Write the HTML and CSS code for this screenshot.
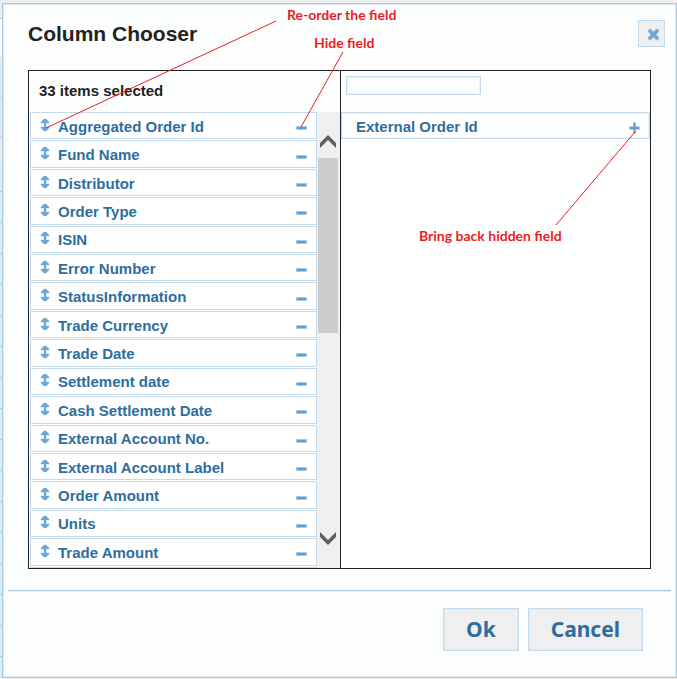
FILE: index.html
```html
<!DOCTYPE html>
<html lang="en">
<head>
<meta charset="utf-8">
<title>Column Chooser</title>
<link rel="stylesheet" href="styles.css">
</head>
<body>
<svg class="symbols" aria-hidden="true">
  <symbol id="move" viewBox="0 0 10 14"><path d="M4 .5h2l3.500 3.500v1.500h-3v3h3V10L6 13.500H4L.5 10V8.500h3v-3h-3V4z" fill="#c5def2"/><path d="M4 1h2l3 3v1H6v4h3v1l-3 3H4l-3-3V9h3V5H1V4z" fill="#6da8d5"/></symbol>
  <symbol id="minus" viewBox="0 0 11 13"><path d="M0 5h11v4H0z" fill="#a5cdea"/><path d="M1 6h9v2H1z" fill="#5f9fd0"/></symbol>
  <symbol id="plus" viewBox="0 0 11 13"><path d="M4 1h3v4h4v4H7v4H4V9H0V5h4z" fill="#b5d5ee"/><path d="M4.500 2h2v4H10v2H6.500v4h-2V8H1V6h3.500z" fill="#5f9fd0"/></symbol>
</svg>
<main class="dialog">
  <header class="titlebar">
    <h1>Column Chooser</h1>
    <button class="close" aria-label="Close"><svg viewBox="0 0 13 13" width="13" height="13"><path d="M3 0 6.500 3 10 0l3 3-3.500 3.500L13 10l-3 3-3.500-3L3 13l-3-3 3.500-3.500L0 3z" fill="#b5d5ee"/><path d="M3 1 6.500 4 10 1l2 2-3 3.500 3 3.500-2 2-3.500-3L3 12l-2-2 3-3.500L1 3z" fill="#6da8d5"/></svg></button>
  </header>
  <section class="chooser">
    <div class="pane selected">
      <div class="pane-head"><span class="count">33 items selected</span><a class="all" href="#">Remove all</a></div>
      <div class="scroller">
        <ul class="fields">
          <li><svg class="move"><use href="#move"/></svg><span>Aggregated Order Id</span><button aria-label="Hide"><svg><use href="#minus"/></svg></button></li>
          <li><svg class="move"><use href="#move"/></svg><span>Fund Name</span><button aria-label="Hide"><svg><use href="#minus"/></svg></button></li>
          <li><svg class="move"><use href="#move"/></svg><span>Distributor</span><button aria-label="Hide"><svg><use href="#minus"/></svg></button></li>
          <li><svg class="move"><use href="#move"/></svg><span>Order Type</span><button aria-label="Hide"><svg><use href="#minus"/></svg></button></li>
          <li><svg class="move"><use href="#move"/></svg><span>ISIN</span><button aria-label="Hide"><svg><use href="#minus"/></svg></button></li>
          <li><svg class="move"><use href="#move"/></svg><span>Error Number</span><button aria-label="Hide"><svg><use href="#minus"/></svg></button></li>
          <li><svg class="move"><use href="#move"/></svg><span>StatusInformation</span><button aria-label="Hide"><svg><use href="#minus"/></svg></button></li>
          <li><svg class="move"><use href="#move"/></svg><span>Trade Currency</span><button aria-label="Hide"><svg><use href="#minus"/></svg></button></li>
          <li><svg class="move"><use href="#move"/></svg><span>Trade Date</span><button aria-label="Hide"><svg><use href="#minus"/></svg></button></li>
          <li><svg class="move"><use href="#move"/></svg><span>Settlement date</span><button aria-label="Hide"><svg><use href="#minus"/></svg></button></li>
          <li><svg class="move"><use href="#move"/></svg><span>Cash Settlement Date</span><button aria-label="Hide"><svg><use href="#minus"/></svg></button></li>
          <li><svg class="move"><use href="#move"/></svg><span>External Account No.</span><button aria-label="Hide"><svg><use href="#minus"/></svg></button></li>
          <li><svg class="move"><use href="#move"/></svg><span>External Account Label</span><button aria-label="Hide"><svg><use href="#minus"/></svg></button></li>
          <li><svg class="move"><use href="#move"/></svg><span>Order Amount</span><button aria-label="Hide"><svg><use href="#minus"/></svg></button></li>
          <li><svg class="move"><use href="#move"/></svg><span>Units</span><button aria-label="Hide"><svg><use href="#minus"/></svg></button></li>
          <li><svg class="move"><use href="#move"/></svg><span>Trade Amount</span><button aria-label="Hide"><svg><use href="#minus"/></svg></button></li>
          <li></li>
        </ul>
        <div class="scrollbar">
          <svg viewBox="0 0 16 13" width="16" height="13"><path d="M0 8 8 0l8 8v5L8 5 0 13z" fill="#606060"/></svg>
          <div class="thumb"></div>
          <svg viewBox="0 0 16 13" width="16" height="13"><path d="M0 0l8 8 8-8v5l-8 8-8-8z" fill="#606060"/></svg>
        </div>
      </div>
    </div>
    <div class="pane available">
      <div class="pane-head"><input class="search" type="text" aria-label="Search fields"><a class="all" href="#">Add all</a></div>
      <ul class="hidden-fields">
        <li><span>External Order Id</span><button aria-label="Show"><svg><use href="#plus"/></svg></button></li>
      </ul>
    </div>
  </section>
  <footer class="buttons">
    <button>Ok</button>
    <button>Cancel</button>
  </footer>
</main>
<div class="notes">
  <svg class="leaders" width="677" height="260" aria-hidden="true"><path d="M276 21 46 128M343 52l-42 75M635 132l-79 93"/></svg>
  <span class="note reorder">Re-order the field</span>
  <span class="note hide">Hide field</span>
  <span class="note restore">Bring back hidden field</span>
</div>
</body>
</html>
```
FILE: styles.css
```css
* { box-sizing: border-box; }

body {
  margin: 0;
  padding: 3px 0 1px 2px;
  position: relative;
  background:
    linear-gradient(#eee 18px, #a6c9e2 18px 19px, #fff 19px 57px, #c5dbec 57px 58px, #eee 58px 60px, #dfe9f2 60px 96px, #c5dbec 96px 97px, #dfe9f2 97px 137px, #a6c9e2 137px 138px, #eee 138px 161px, transparent 161px) 0 0 / 2px 100% no-repeat,
    repeating-linear-gradient(#dfebf5 0 30px, #a6c9e2 30px 31px) 0 6px / 2px 100% no-repeat,
    #eee;
  color: #222;
  font: bold 15px/18px "Liberation Sans", Arial, sans-serif;
}

button { padding: 0; font: inherit; cursor: pointer; }
ul { list-style: none; margin: 0; padding: 0; }
.symbols { position: absolute; width: 0; height: 0; }

.dialog {
  border: 1px solid #a6c9e2;
  box-shadow: inset 0 0 0 1px #dfedf7;
  background: #fcfefe;
  padding: 16px 5px 26px;
}

.titlebar {
  display: flex;
  justify-content: space-between;
  align-items: flex-start;
  padding: 0 6px 0 20px;
}

h1 { margin: 0; font-size: 21px; line-height: 28px; }

.close {
  display: flex;
  align-items: center;
  justify-content: center;
  width: 27px;
  height: 27px;
  padding: 2px 0 0 3px;
  border: 1px solid #c5dbec;
  background: #efefef;
}

.chooser {
  display: flex;
  height: 499px;
  margin: 22px 20px 21px;
  border: 1px solid #222;
}

.pane { display: flex; flex-direction: column; min-width: 0; }
.selected { flex: 1 1 312px; border-right: 1px solid #222; }
.available { flex: 1 1 309px; background: #fff; }

.pane-head {
  display: flex;
  justify-content: space-between;
  align-items: center;
  height: 41px;
  flex: none;
  padding: 0 10px 2px;
  background: #fcfefe;
}

.all { color: #fff; text-decoration: none; }

.search {
  align-self: flex-start;
  width: 135px;
  height: 19px;
  margin: 5px 0 0 -5px;
  border: 1px solid #c5dbec;
  box-shadow: inset 0 0 0 1px #e8f2f9;
  background: #fcfefe;
}

.scroller { display: flex; flex: 1; min-height: 0; overflow: hidden; background: #fff; }

.fields {
  flex: 1;
  display: grid;
  grid-template-rows: repeat(17, 1fr);
  gap: 1px;
  height: 482px;
  margin-left: 1px;
}

li {
  display: flex;
  align-items: center;
  border: 1px solid #c5dbec;
  background: #fff;
  color: #2e6e9e;
  min-height: 0;
}

li span { flex: 1; padding-top: 2px; }
li svg { display: block; width: 11px; height: 13px; }
li .move { width: 10px; height: 14px; margin: 0 8px 2px 9px; }
li button { border: 0; background: none; margin: 4px 9px 0 0; }
.hidden-fields li { height: 27px; padding-left: 14px; box-shadow: inset 0 0 0 1px #e8f2f9; }

.scrollbar {
  display: flex;
  flex-direction: column;
  align-items: center;
  width: 23px;
  padding: 23px 1px 23px 0;
  background: #efefef;
}

.thumb { width: 20px; height: 175px; margin: 10px 0 auto; background: #cdcdcd; }

.buttons {
  display: flex;
  justify-content: flex-end;
  gap: 9px;
  padding: 17px 28px 0 0;
  border-top: 1px solid #a6c9e2;
  box-shadow: inset 0 1px #dfedf7;
}

.buttons button {
  height: 43px;
  padding: 0 22px 2px;
  border: 1px solid #c5dbec;
  box-shadow: inset 0 0 0 1px #dfe9f2;
  background: #efefef;
  color: #2e6e9e;
  font: bold 21px/26px "Noto Sans", sans-serif;
}

.notes { position: absolute; top: 0; left: 0; pointer-events: none; }
.leaders { display: block; }
.leaders path { fill: none; stroke: #ed1c24; stroke-width: 1; }

.note {
  position: absolute;
  color: #ed1c24;
  font: bold 14px/18px Lato, sans-serif;
  white-space: nowrap;
}

.reorder { left: 287px; top: 6px; }
.hide { left: 314px; top: 34px; }
.restore { left: 419px; top: 227px; }
```
